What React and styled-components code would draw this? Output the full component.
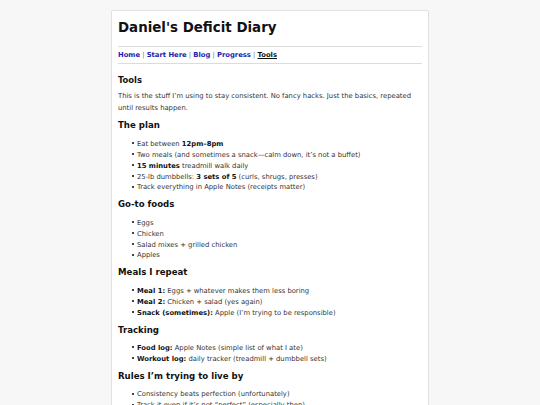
import React from "react";
import styled, { createGlobalStyle } from "styled-components";

const Global = createGlobalStyle`
  html, body { margin: 0; padding: 0; background: #f7f7f7; }
  body { font-family: "DejaVu Sans", Verdana, sans-serif; color: #333; }
`;

const Page = styled.div`
  padding-top: 10px;
  display: flex;
  justify-content: center;
`;

const Card = styled.main`
  width: 318px;
  box-sizing: border-box;
  background: #fff;
  border: 1px solid #e2e2e2;
  border-radius: 2px;
  padding: 9px 6px 20px;
`;

const Title = styled.h1`
  margin: 0 0 10px;
  font-size: 13.4px;
  line-height: 16px;
  font-weight: bold;
  color: #111;
`;

const Nav = styled.nav`
  border-top: 1px solid #dcdcdc;
  border-bottom: 1px solid #dcdcdc;
  padding: 3px 0;
  font-size: 6.8px;
  line-height: 10px;
  font-weight: bold;
`;

const NavLink = styled.a`
  color: ${(p) => (p.$active ? "#111" : "#1c1cb0")};
  text-decoration: ${(p) => (p.$active ? "underline" : "none")};
`;

const Sep = styled.span`
  color: #777;
  font-weight: normal;
`;

const PageTitle = styled.h2`
  margin: 11px 0 6px;
  font-size: 8.4px;
  line-height: 10px;
  font-weight: bold;
  color: #111;
`;

const Para = styled.p`
  margin: 0;
  font-size: 6.8px;
  line-height: 11.7px;
`;

const Heading = styled.h3`
  margin: 6px 0 8px;
  font-size: 8.6px;
  line-height: 10.4px;
  font-weight: bold;
  color: #111;
`;

const List = styled.ul`
  margin: 0;
  padding-left: 19px;
  list-style: none;
  font-size: 6.8px;
  line-height: 10.9px;
`;

const Item = styled.li`
  &::before {
    content: "";
    display: inline-block;
    width: 2px;
    height: 2px;
    background: #444;
    margin-left: -5px;
    margin-right: 3px;
    vertical-align: 1.5px;
  }
`;

const B = styled.strong`
  color: #111;
`;

const links = ["Home", "Start Here", "Blog", "Progress", "Tools"];

export default function App() {
  return (
    <>
      <Global />
      <Page>
        <Card>
          <Title>Daniel's Deficit Diary</Title>
          <Nav>
            {links.map((l, i) => (
              <React.Fragment key={l}>
                {i > 0 && <Sep> | </Sep>}
                <NavLink href="#" $active={l === "Tools"}>{l}</NavLink>
              </React.Fragment>
            ))}
          </Nav>
          <PageTitle>Tools</PageTitle>
          <Para>
            This is the stuff I’m using to stay consistent. No fancy hacks. Just the basics, repeated until results happen.
          </Para>

          <Heading>The plan</Heading>
          <List>
            <Item>Eat between <B>12pm–8pm</B></Item>
            <Item>Two meals (and sometimes a snack—calm down, it’s not a buffet)</Item>
            <Item><B>15 minutes</B> treadmill walk daily</Item>
            <Item>25-lb dumbbells: <B>3 sets of 5</B> (curls, shrugs, presses)</Item>
            <Item>Track everything in Apple Notes (receipts matter)</Item>
          </List>

          <Heading>Go-to foods</Heading>
          <List>
            <Item>Eggs</Item>
            <Item>Chicken</Item>
            <Item>Salad mixes + grilled chicken</Item>
            <Item>Apples</Item>
          </List>

          <Heading>Meals I repeat</Heading>
          <List>
            <Item><B>Meal 1:</B> Eggs + whatever makes them less boring</Item>
            <Item><B>Meal 2:</B> Chicken + salad (yes again)</Item>
            <Item><B>Snack (sometimes):</B> Apple (I’m trying to be responsible)</Item>
          </List>

          <Heading>Tracking</Heading>
          <List>
            <Item><B>Food log:</B> Apple Notes (simple list of what I ate)</Item>
            <Item><B>Workout log:</B> daily tracker (treadmill + dumbbell sets)</Item>
          </List>

          <Heading>Rules I’m trying to live by</Heading>
          <List>
            <Item>Consistency beats perfection (unfortunately)</Item>
            <Item>Track it even if it’s not “perfect” (especially then)</Item>
            <Item>Walk every day, even when I don’t feel like it</Item>
          </List>
        </Card>
      </Page>
    </>
  );
}
